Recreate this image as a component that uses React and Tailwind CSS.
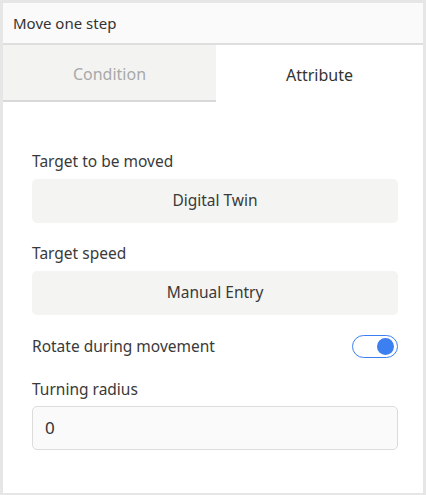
import React, { useState } from "react";

const Field = ({ label, value }) => (
    <div className="flex flex-col">
        <span className="text-[15.5px] leading-[22px] text-[#3a3a3a]">{label}</span>
        <div className="mt-[7px] flex h-[44px] items-center justify-center rounded-[5px] bg-[#f4f5f2] text-[15.5px] text-[#3a3a3a]">
            {value}
        </div>
    </div>
);

const App = () => {
    const [tab, setTab] = useState("attribute");
    const [rotate, setRotate] = useState(true);

    return (
        <main
            className="flex h-[495px] w-[426px] flex-col border-x-[3px] border-t-[3px] border-b-[2px] border-[#e6e6e6] bg-white"
            style={{ fontFamily: '"Noto Sans", "Open Sans", sans-serif' }}
        >
            <div className="flex h-[42px] items-center border-b-2 border-[#dedede] bg-[#fafafa] px-[10px] text-[15px] text-[#333]">
                Move one step
            </div>
            <div className="flex h-[57px]">
                <button
                    onClick={() => setTab("condition")}
                    className="flex w-[213px] items-center justify-center border-b-2 border-[#d8d8d8] bg-[#f3f4f1] pt-[3px] text-[16px] text-[#a8a8a8]"
                >
                    Condition
                </button>
                <button
                    onClick={() => setTab("attribute")}
                    className="flex flex-1 items-center justify-center bg-white pt-[3px] text-[16px] text-[#333]"
                >
                    Attribute
                </button>
            </div>

            <div className="flex flex-col pl-[29px] pr-[25px] pt-[48px]">
                <Field label="Target to be moved" value="Digital Twin" />
                <div className="mt-[19px]">
                    <Field label="Target speed" value="Manual Entry" />
                </div>

                <div className="mt-[20px] flex h-[23px] items-center justify-between">
                    <span className="text-[15.5px] text-[#3a3a3a]">Rotate during movement</span>
                    <button
                        onClick={() => setRotate(!rotate)}
                        className="flex h-[23px] w-[46px] items-center justify-end rounded-full border-[1.5px] border-[#3b7ff0] bg-white px-[3px]"
                    >
                        <span className="h-[17px] w-[17px] rounded-full bg-[#3b7ff0]" />
                    </button>
                </div>

                <span className="mt-[20px] text-[15.5px] leading-[22px] text-[#3a3a3a]">Turning radius</span>
                <div className="mt-[6px] flex h-[44px] items-center rounded-[5px] border border-[#dcdcdc] bg-[#fafafa] px-[12px] text-[17px] text-[#333]">
                    0
                </div>
            </div>
        </main>
    );
};

export default App;
